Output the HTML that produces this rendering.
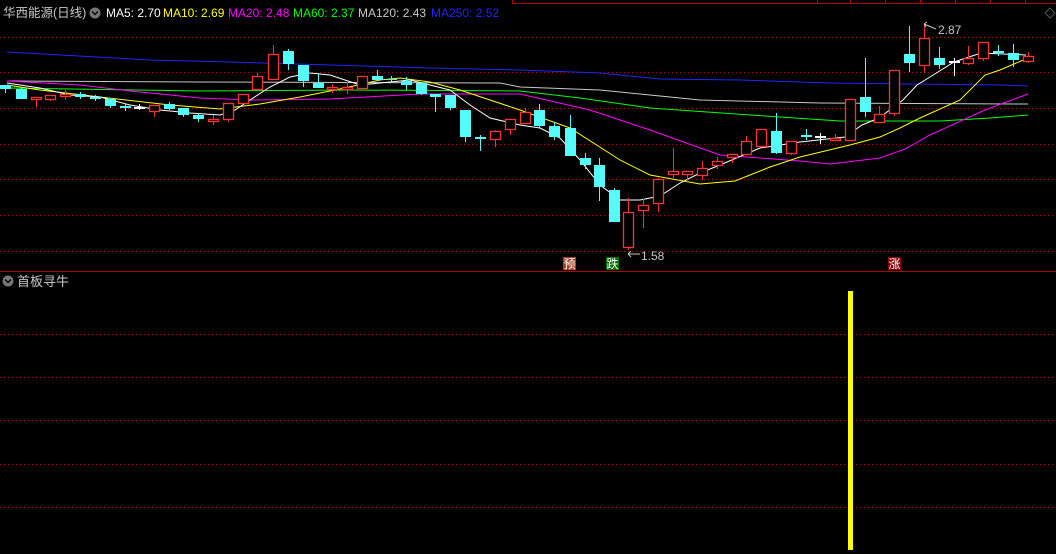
<!DOCTYPE html>
<html><head><meta charset="utf-8"><style>
html,body{margin:0;padding:0;background:#000;width:1056px;height:554px;overflow:hidden}
svg{position:absolute;left:0;top:0}
text{font-family:"Liberation Sans","Noto Sans CJK SC",sans-serif}
</style></head><body>
<svg id="s" width="1056" height="554" viewBox="0 0 1056 554">
<g stroke="#a00000" stroke-width="1" stroke-dasharray="1,3">
<line x1="0" y1="37.5" x2="1056" y2="37.5"/><line x1="0" y1="72.5" x2="1056" y2="72.5"/>
<line x1="0" y1="108.5" x2="1056" y2="108.5"/><line x1="0" y1="144.5" x2="1056" y2="144.5"/>
<line x1="0" y1="179.5" x2="1056" y2="179.5"/><line x1="0" y1="215.5" x2="1056" y2="215.5"/>
<line x1="0" y1="251.5" x2="1056" y2="251.5"/>
<line x1="0" y1="334.5" x2="1056" y2="334.5"/><line x1="0" y1="377.5" x2="1056" y2="377.5"/>
<line x1="0" y1="420.5" x2="1056" y2="420.5"/><line x1="0" y1="464.5" x2="1056" y2="464.5"/>
<line x1="0" y1="507.5" x2="1056" y2="507.5"/>
</g>
<g stroke="#b00000" stroke-width="1">
<line x1="512" y1="3.5" x2="1056" y2="3.5"/>
<line x1="512.5" y1="0" x2="512.5" y2="3"/><line x1="817.5" y1="0" x2="817.5" y2="3"/><line x1="850.5" y1="0" x2="850.5" y2="3"/><line x1="885.5" y1="0" x2="885.5" y2="3"/><line x1="920.5" y1="0" x2="920.5" y2="3"/><line x1="955.5" y1="0" x2="955.5" y2="3"/><line x1="990.5" y1="0" x2="990.5" y2="3"/><line x1="1025.5" y1="0" x2="1025.5" y2="3"/>
<line x1="0" y1="271.5" x2="1056" y2="271.5"/>
</g>
<path d="M1050 8 L1055 13 L1050 18 L1045 13 Z" fill="none" stroke="#555"/>
<g fill="none" stroke-width="1">
<polyline stroke="#2323ff" points="7,52 150,60 230,62 330,65 430,68 520,70 600,73 660,79 740,80 830,83 1000,85 1028,86"/>
<polyline stroke="#c8c8c8" points="7,81 200,82 500,83 520,87 600,90 700,100 820,103 1028,104"/>
<polyline stroke="#00ff00" points="7,88 200,91 350,90 520,91 580,98 650,108 780,117 840,121 940,121 990,118 1028,115"/>
<polyline stroke="#ff00ff" points="7,81 80,85 130,91 200,98 250,100 330,99 420,94 520,94 590,110 650,130 720,155 800,161 830,164 880,158 905,149 930,135 985,110 1028,94"/>
<polyline stroke="#ffff00" points="7,85 40,90 100,97 170,105 220,109 260,104 300,97 340,89 380,80 400,78 430,82 460,90 520,110 570,128 620,160 650,175 700,184 735,181 770,167 800,157 850,145 880,137 900,128 920,118 960,100 985,75 1000,70 1028,58"/>
<polyline stroke="#ffffff" points="7,83 40,88 70,95 100,97 130,105 160,110 190,113 220,115 235,110 250,100 270,87 290,77 310,73 330,75 345,80 360,85 380,83 410,80 430,85 450,90 470,105 490,118 520,125 540,128 560,138 580,160 600,185 620,200 640,200 660,196 680,183 700,173 720,165 760,148 800,142 845,137 862,125 879,118 903,100 917,85 930,77 954,62 981,53 1026,55"/>
</g>
<g id="c"></g>
<rect x="848" y="291" width="5" height="259" fill="#ffff00"/>
<text x="3" y="17" font-size="12.5" fill="#c8c8c8">华西能源(日线)</text>
<circle cx="95" cy="13" r="5.5" fill="#777"/><path d="M92 11.5 L95 14.5 L98 11.5" stroke="#000" fill="none" stroke-width="1.3"/>
<text x="106" y="17" font-size="12" fill="#ffffff">MA5: 2.70</text>
<text x="163" y="17" font-size="12" fill="#ffff00">MA10: 2.69</text>
<text x="228" y="17" font-size="12" fill="#ff00ff">MA20: 2.48</text>
<text x="293" y="17" font-size="12" fill="#00ff00">MA60: 2.37</text>
<text x="358" y="17" font-size="12" fill="#c8c8c8">MA120: 2.43</text>
<text x="431" y="17" font-size="12" fill="#2323ff">MA250: 2.52</text>
<text x="938" y="34" font-size="12" fill="#c8c8c8">2.87</text>
<path d="M924 24 L936 29 M924 24 L927 22 M924 24 L926 27" stroke="#c8c8c8" fill="none"/>
<text x="641" y="260" font-size="12" fill="#c8c8c8">1.58</text>
<path d="M628 254 L640 254 M628 254 L631 251 M628 254 L631 257" stroke="#c8c8c8" fill="none"/>
<rect x="563" y="257" width="13" height="13" fill="#a0401c"/><text x="563.5" y="268" font-size="12" fill="#fff">预</text>
<rect x="606" y="257" width="13" height="13" fill="#007000"/><text x="606.5" y="268" font-size="12" fill="#fff">跌</text>
<rect x="888" y="257" width="13" height="13" fill="#8a0000"/><text x="888.5" y="268" font-size="12" fill="#fff">涨</text>
<circle cx="8" cy="281" r="5.5" fill="#777"/><path d="M5 279.5 L8 282.5 L11 279.5" stroke="#000" fill="none" stroke-width="1.3"/>
<text x="17" y="286" font-size="13" fill="#c8c8c8">首板寻牛</text>
</svg>
<script>
var d=[
[5,'c',85,89,85,93],[21,'c',89,99,87,99],[36,'r',97,99,97,107],[50,'r',95,99,95,101],[65,'r',94,96,90,100],
[80,'c',94,97,92,99],[95,'k',97,98,95,101],[110,'c',99,106,98,108],[125,'k',106,108,104,111],[139,'w',107,108,104,110],
[154,'r',105,111,105,117],[169,'c',104,109,102,110],[183,'c',108,115,108,117],[198,'c',115,119,113,122],[213,'r',119,121,115,125],
[228,'r',103,119,103,122],[243,'r',94,103,94,104],[257,'r',76,89,73,89],[273,'r',54,79,45,79],[288,'c',51,64,49,70],
[303,'c',65,81,65,87],[318,'c',83,88,73,88],[332,'r',87,89,84,93],[347,'r',87,89,81,94],[362,'r',76,88,76,89],
[377,'c',76,80,70,80],[391,'c',79,80,76,82],[406,'c',81,85,77,90],[421,'c',83,94,83,95],[435,'c',94,97,94,112],
[450,'c',95,108,95,110],[465,'c',110,137,110,142],[480,'k',137,138,135,151],[495,'r',131,139,130,147],[510,'r',119,129,119,135],
[525,'r',112,123,108,123],[539,'c',110,126,104,128],[554,'c',126,137,122,140],[570,'c',128,156,115,156],[585,'c',158,165,153,169],
[599,'c',165,187,158,201],[614,'c',190,222,188,222],[628,'r',212,247,198,250],[643,'r',205,210,199,228],[658,'r',179,203,178,212],
[673,'r',171,174,148,178],[687,'r',171,174,171,182],[702,'r',168,175,161,180],[717,'r',161,165,157,169],[732,'r',154,157,154,163],
[746,'r',141,154,136,154],[761,'r',129,146,129,147],[776,'c',131,153,113,154],[791,'r',141,153,141,155],[806,'k',135,137,129,140],
[820,'w',136,137,133,144],[835,'r',138,140,134,140],[850,'r',99,140,99,141],[865,'c',97,112,58,117],[879,'r',114,122,106,122],
[894,'r',70,113,70,116],[909,'c',54,63,26,72],[924,'r',38,65,24,73],[939,'c',58,65,47,69],[954,'w',61,62,58,76],
[968,'r',58,63,46,65],[983,'r',42,58,42,61],[998,'k',51,53,45,56],[1013,'c',53,60,44,67],[1028,'r',56,61,52,63]];
var g=document.getElementById('c'),h='';
d.forEach(function(a){var x=a[0],t=a[1],c=t=='r'?'#ff3232':(t=='w'?'#ffffff':'#54fcfc');
var bh=Math.max(1,a[3]-a[2]);
h+='<line x1="'+(x+.5)+'" y1="'+a[4]+'" x2="'+(x+.5)+'" y2="'+a[5]+'" stroke="'+c+'"/>';
if(t=='r'){h+='<rect x="'+(x-5+.5)+'" y="'+(a[2]+.5)+'" width="10" height="'+bh+'" fill="#000" stroke="'+c+'" stroke-width="1.3"/>';}
else if(t=='c'){h+='<rect x="'+(x-5)+'" y="'+a[2]+'" width="11" height="'+bh+'" fill="'+c+'"/>';}
else{h+='<rect x="'+(x-5)+'" y="'+a[2]+'" width="11" height="'+Math.max(2,bh)+'" fill="'+c+'"/>';}
});
g.innerHTML=h;
</script>
</body></html>
